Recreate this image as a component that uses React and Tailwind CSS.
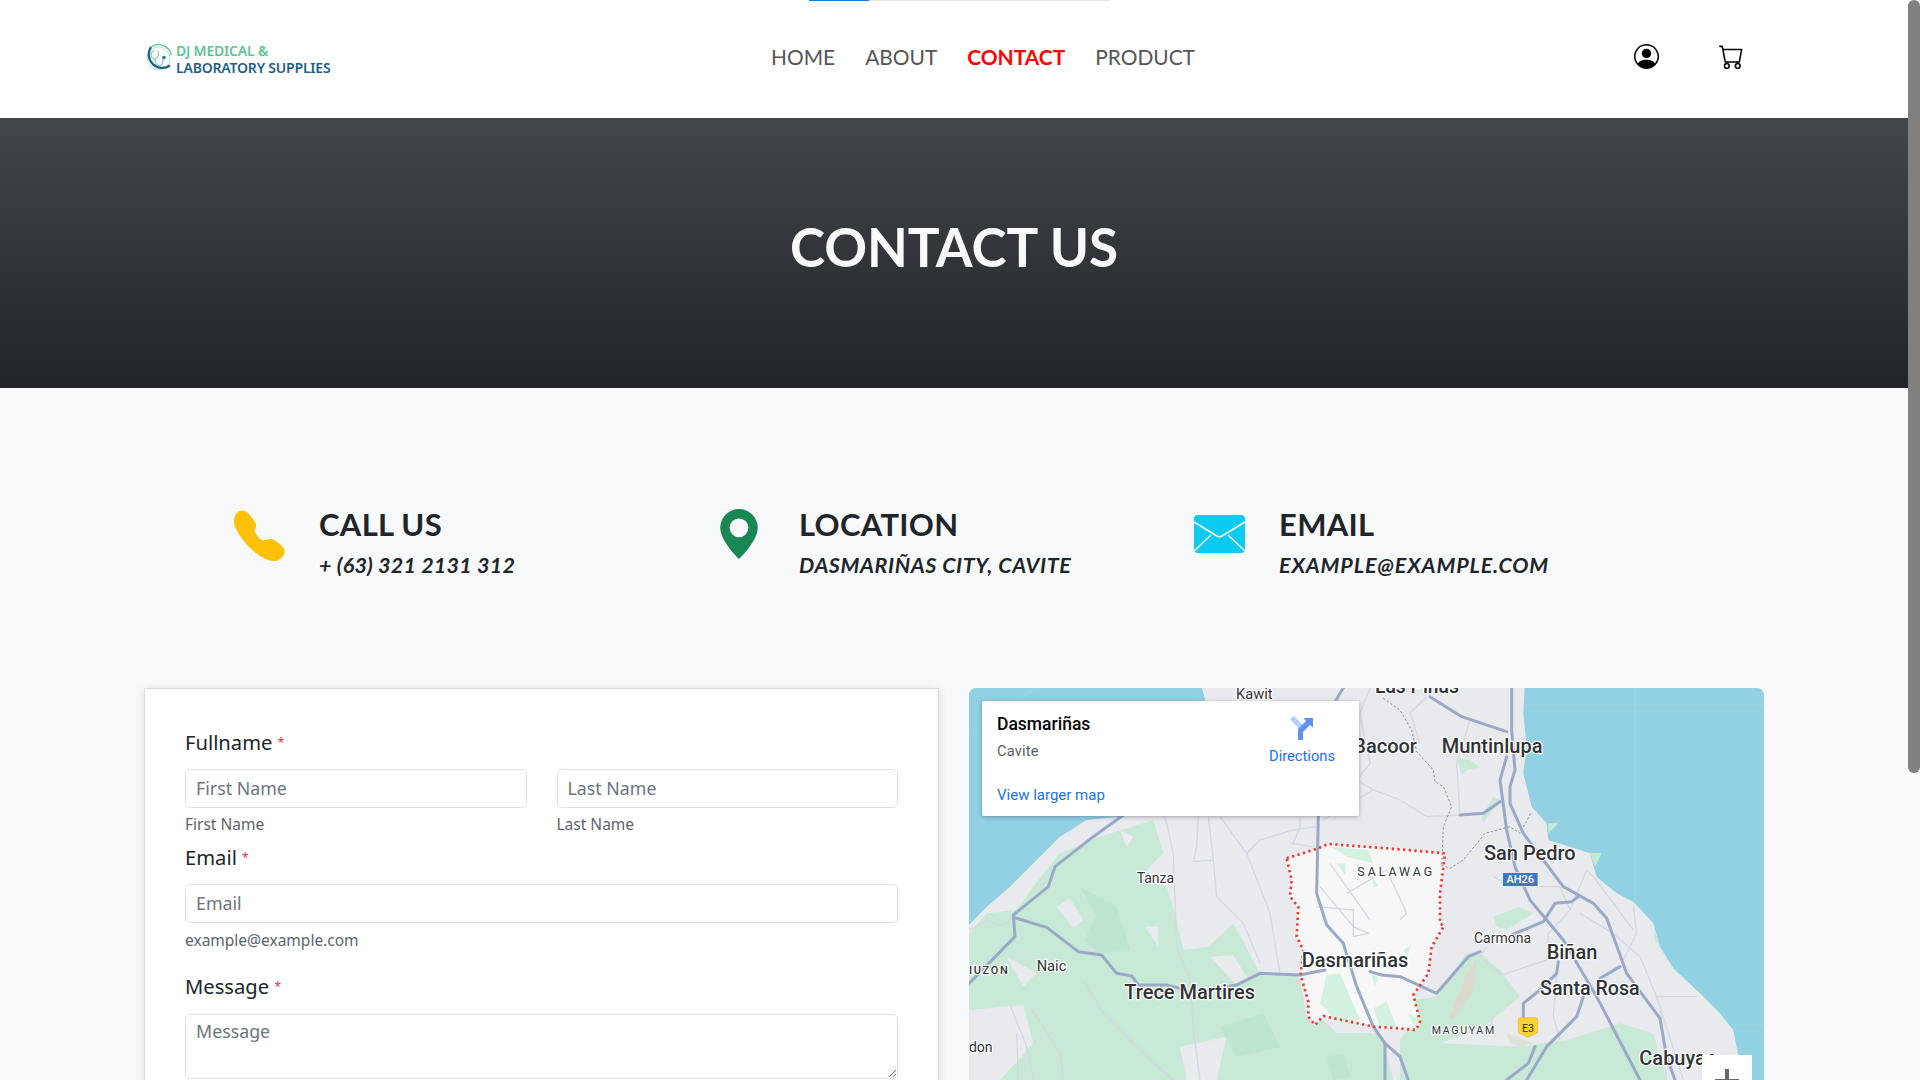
import React from 'react';
import { BsPersonCircle, BsCart, BsGeoAltFill } from 'react-icons/bs';

const NUNITO = "font-['Lato','Noto_Sans',sans-serif]";

const highways = [
  'M490 405L400 470L285 560L265 620L160 705L165 770L27 910',
  'M160 712L260 742L355 815L425 825L470 880L515 888L535 915L620 915L660 925L700 940L830 915L900 880L1020 885L1095 870',
  'M1075 405L1070 640L1100 735L1150 790L1190 920L1240 1040L1275 1090L1275 1200',
  'M1275 1090L1320 1130L1345 1200',
  'M1150 24L1125 65',
  'M1230 875L1265 885L1320 890L1430 940L1525 830L1560 815',
  // right hand side of the map
  'M1655 24L1655 150L1665 270L1650 320L1650 370L1690 460L1750 540L1810 620L1900 670L1940 715L2000 880L2100 1015L2120 1130L2145 1200',
  'M1640 230L1620 300L1640 450L1665 560L1710 660L1810 780L1910 950L2040 1200',
  'M1410 50L1505 110L1640 155',
  'M1500 405L1570 400L1620 365',
  'M1855 650L1835 665L1785 670L1750 725L1655 765',
  'M1980 860L1920 895',
  'M1795 845L1790 880L1740 930L1690 970L1690 1010',
  'M1870 950L1850 1010L1760 1100L1700 1200',
  'M1725 1100L1705 1150L1640 1200',
];

const minorRoads = [
  'M615 410L640 520L650 800L690 900L700 1050L720 1200',
  'M715 410L710 500L700 545L760 540L745 410',
  'M780 410L860 520L930 700L940 760L960 880',
  'M760 540L770 650L850 730L900 850',
  'M860 520L900 480L1000 450L1070 440',
  'M1000 490L1020 440L1020 410',
  'M990 490L1060 500',
  'M1080 620L1180 740L1225 760L1180 770L1180 690L1070 680',
  'M1110 550L1230 720M1160 640L1280 570L1340 700L1320 720',
  'M150 975L200 1100L220 1200M170 1060L175 1200M210 980L300 1120L310 1200',
  'M370 900L430 1000L560 1130L640 1200',
  'M27 750L80 720L125 740L160 712',
  'M1090 420L1240 330L1190 300L1230 250L1200 100L1230 24',
  'M1240 330L1320 360L1400 410L1500 405L1490 250L1530 120',
  'M1400 50L1350 100L1380 190',
  'M1600 1000L1590 1050M1580 800L1560 830L1625 885L1760 840L1765 760L1830 690M1760 840L1840 790',
  'M1600 590L1660 620L1800 620L1830 690L1880 570L1900 590L2020 750',
  'M1860 700L1960 760L2040 830L2090 950L2170 1200',
  'M2020 680L2030 760L1990 840',
  'M2085 950L2210 950M2100 975L2120 1200',
  'M1790 880L1780 1010L1800 1080',
];

const dasmarinas = '980,535 1075,505 1105,492 1320,508 1455,520 1440,640 1440,730 1452,738 1415,800 1405,880 1360,945 1380,1025 1368,1050 1320,1045 1240,1040 1090,1008 1065,1035 1045,1010 1045,965 1022,885 1030,810 1010,770 1015,680 990,650 995,600';

const labels = [
  { x: 828, y: 58, size: 44, text: 'Kawit' },
  { x: 1245, y: 40, size: 58, text: 'Las Piñas', weight: 500 },
  { x: 1180, y: 218, size: 60, text: 'Bacoor', weight: 500 },
  { x: 1445, y: 220, size: 60, text: 'Muntinlupa', weight: 500 },
  { x: 530, y: 610, size: 42, text: 'Tanza' },
  { x: 230, y: 873, size: 44, text: 'Naic' },
  { x: 27, y: 882, size: 33, text: 'IUZON', spacing: 5, weight: 500 },
  { x: 493, y: 957, size: 60, text: 'Trece Martires', weight: 500 },
  { x: 1025, y: 862, size: 60, text: 'Dasmariñas', weight: 500 },
  { x: 1192, y: 587, size: 37, text: 'SALAWAG', spacing: 9 },
  { x: 27, y: 1116, size: 42, text: 'don' },
  { x: 1572, y: 540, size: 60, text: 'San Pedro', weight: 500 },
  { x: 1542, y: 790, size: 42, text: 'Carmona' },
  { x: 1760, y: 836, size: 60, text: 'Biñan', weight: 500 },
  { x: 1740, y: 945, size: 59, text: 'Santa Rosa', weight: 500 },
  { x: 1415, y: 1062, size: 32, text: 'MAGUYAM', spacing: 5 },
  { x: 2038, y: 1155, size: 60, text: 'Cabuyao', weight: 500 },
];

const MapDrawing = () => (
  <svg viewBox="0 0 795 620" className="block w-full h-full">
    <g transform="translate(-9 -8) scale(0.33333)">
      <rect x="0" y="0" width="2500" height="2000" fill="#e8eaed" />

      {/* water */}
      <polygon fill="#92d0e3" points="0,0 720,0 735,60 480,410 380,420 300,470 230,540 150,620 80,680 27,735 0,760" />
      <polygon fill="#92d0e3" points="1695,0 1690,100 1700,200 1690,280 1715,380 1760,430 1765,480 1890,520 1910,590 1970,640 2020,665 2080,730 2100,800 2140,865 2220,940 2280,1000 2320,1050 2350,1200 2500,1200 2500,0" />
      <path d="M30 170L160 60M60 120L230 24M2026 24V660M1690 75H2412M2320 1035H2412" stroke="#a5d9e8" strokeWidth="2" fill="none" />

      {/* green areas */}
      <polygon fill="#c9e9d7" points="27,760 80,700 170,690 235,600 300,520 420,470 580,420 610,520 540,590 620,620 650,720 670,810 745,800 820,730 900,880 1000,880 1020,900 1040,1010 1090,1020 1130,1060 1250,1060 1275,1100 1300,1200 27,1200" />
      <polygon fill="#c9e9d7" points="1320,1080 1360,1030 1360,960 1430,950 1520,820 1560,820 1620,870 1680,950 1570,1040 1440,1090 1670,1100 1820,1080 1980,1030 2080,1060 2120,1200 1320,1200" />
      <polygon fill="#c9e9d7" points="1490,235 1530,240 1560,262 1520,270 1505,285" />
      <polygon fill="#c9e9d7" points="1600,710 1680,680 1720,700 1640,750 1610,740" />
      <polygon fill="#c9e9d7" points="1600,350 1620,360 1570,430 1565,410" />
      <polygon fill="#c9e9d7" points="1765,430 1795,430 1765,460" />
      <polygon fill="#c9e9d7" points="1890,518 1925,520 1905,560" />
      <polygon fill="#c9e9d7" points="2080,730 2095,790 2085,790" />
      <polygon fill="#e8eaed" points="27,990 190,975 220,1090 120,1200 27,1200" />
      <polygon fill="#e8eaed" points="290,680 330,655 370,720 340,745" />
      <polygon fill="#e8eaed" points="750,830 820,825 860,890 830,915" />
      <polygon fill="#e8eaed" points="555,740 595,740 595,800" />
      <polygon fill="#e8eaed" points="480,450 520,470 500,500" />
      <polygon fill="#e8eaed" points="660,1100 800,1070 770,1200 680,1200" />
      <polygon fill="#e8eaed" points="140,830 230,880 190,920" />
      <polygon fill="#dcd9cf" points="1470,1010 1520,880 1550,840 1540,930 1480,1020" />
      <polygon fill="#dfe0d8" points="1640,1060 1720,1090 1680,1100 1650,1090" />
      <polygon fill="#bfe4d0" points="360,620 470,680 510,810 420,820 370,780 410,710" />
      <polygon fill="#bfe4d0" points="780,1040 910,1000 960,1100 830,1130" />
      <polygon fill="#bfe4d0" points="1100,1130 1150,1120 1170,1190 1120,1200" />

      {/* city area */}
      <polygon fill="#f7f7f8" points={dasmarinas} />
      <g fill="#d3f3e0">
        <polygon points="1115,500 1225,510 1240,550 1160,530" />
        <polygon points="1130,550 1158,550 1155,585" />
        <polygon points="1235,585 1255,620 1240,620" />
        <polygon points="1100,885 1140,880 1200,1020 1135,1030 1080,970" />
        <polygon points="1240,985 1280,965 1310,1040 1260,1040" />
        <polygon points="1330,810 1355,795 1340,830" />
        <polygon points="1235,885 1255,890 1245,920" />
        <polygon points="1345,1000 1380,1020 1365,1045" />
      </g>

      <g fill="none" stroke="#d2d8e3" strokeWidth="4" strokeLinejoin="round">
        {minorRoads.map((d, i) => <path key={i} d={d} />)}
      </g>

      {/* dashed boundary */}
      <path d="M1270 55L1320 90L1355 150L1370 215L1420 270L1425 305L1450 320L1475 380L1450 440L1445 560M1445 555L1470 565L1510 540L1575 460L1650 440L1680 460L1715 395" fill="none" stroke="#8a8f96" strokeWidth="3" strokeDasharray="7 6" />

      <g fill="none" stroke="#9aa9c8" strokeWidth="9" strokeLinejoin="round" strokeLinecap="round">
        {highways.map((d, i) => <path key={i} d={d} />)}
      </g>

      <polygon points={dasmarinas} fill="none" stroke="#ef3b36" strokeWidth="8" strokeDasharray="7 10" />

      <g fontFamily="Roboto, sans-serif" fill="#303336" stroke="#ffffff" strokeWidth="7" strokeLinejoin="round" paintOrder="stroke">
        {labels.map(l => (
          <text key={l.text} x={l.x} y={l.y} fontSize={l.size} fontWeight={l.weight || 400} letterSpacing={l.spacing || 0}>{l.text}</text>
        ))}
      </g>

      {/* road shields */}
      <rect x="1628" y="578" width="106" height="41" fill="#3b78c9" stroke="#fff" strokeWidth="2" />
      <text x="1681" y="610" textAnchor="middle" fontFamily="Roboto, sans-serif" fontSize="33" fontWeight="500" fill="#fff">AH26</text>
      <path d="M1682 1013H1726Q1733 1013 1733 1020V1058L1704 1072L1675 1058V1020Q1675 1013 1682 1013Z" fill="#fbd232" stroke="#e8b923" strokeWidth="2" />
      <text x="1704" y="1055" textAnchor="middle" fontFamily="Roboto, sans-serif" fontSize="32" fill="#333">E3</text>
    </g>
  </svg>
);

const PhoneIcon = () => (
  <svg viewBox="20 25 165 160" className="w-[55px] h-[53px] -ml-[2px]" fill="#ffc107" stroke="#ffc107" strokeWidth="8" strokeLinejoin="round">
    <path d="M32 48C36 34 52 30 62 38C72 48 84 62 88 72C90 82 82 88 84 94C90 106 100 118 110 124C118 126 128 116 140 120C152 126 168 138 174 148C178 158 166 174 152 178C136 180 112 170 90 152C64 130 42 102 32 76C28 66 29 56 32 48Z" />
  </svg>
);

const MailIcon = () => (
  <svg viewBox="0 0 51 38" className="w-[51px] h-[38px] mt-[6px]">
    <rect width="51" height="38" rx="4" fill="#0dcaf0" />
    <path d="M0 7L23 21Q25.500 22.500 28 21L51 7M0 36L17 20M51 36L34 20" fill="none" stroke="#f8f9fb" strokeWidth="1.600" />
  </svg>
);

const Logo = () => (
  <div className="flex items-center">
    <svg viewBox="0 0 29 29" className="w-[29px] h-[29px]">
      <circle cx="14.500" cy="14.500" r="11.500" fill="none" stroke="#86dcbf" strokeWidth="0.700" />
      <path d="M7 3A13.500 13.500 0 0 1 27.500 11" fill="none" stroke="#5cc596" strokeWidth="1.300" />
      <path d="M7 3A13.500 13.500 0 0 0 26 21.500" fill="none" stroke="#1f5f86" strokeWidth="2.200" />
      <path d="M8 8C6 12 8 15 11 15C11 20 14 23 17 21C19 20 19 17 19 15M8 8L10.500 6.500M14 7C15 11 14 14 11 15" fill="none" stroke="#3fbfa3" strokeWidth="0.900" />
      <circle cx="20" cy="13.500" r="1.800" fill="#2c7a8f" />
    </svg>
    <div className="ml-[3px] font-['Noto_Sans',sans-serif] font-semibold text-[14px] leading-[17px] tracking-[-0.200px]">
      <div className="text-[#5cc596]">DJ MEDICAL &amp;</div>
      <div className="text-[#1f5f86]">LABORATORY SUPPLIES</div>
    </div>
  </div>
);

const InfoItem = ({ icon, title, text, spacing }) => (
  <div className="flex items-start">
    <div className="w-[85px] shrink-0 pt-[3px]">{icon}</div>
    <div className={NUNITO + ' text-[#212529]'}>
      <div className="text-[31px] leading-[36px] font-bold tracking-[0.300px]">{title}</div>
      <div className={'mt-[8px] text-[21.500px] leading-[30px] font-bold italic ' + spacing}>{text}</div>
    </div>
  </div>
);

const Label = ({ children }) => (
  <label className="block text-[20.200px] leading-[30px] text-[#212529]">
    {children} <span className="text-[12px] text-[#dc3545] align-[3px]">*</span>
  </label>
);

const hintClass = 'mt-[5px] text-[15.500px] leading-[22px] text-[#5c636a]';
const inputClass = 'block w-full h-[39px] px-[10px] pb-[2px] border border-[#dee2e6] rounded-[5px] bg-white text-[17.800px] placeholder:text-[#6c757d] outline-none';

export default function App() {
  return (
    <div className="relative flex h-screen overflow-hidden bg-[#f8f9fb]">
      {/* page load bar */}
      <div className="absolute top-0 left-[809px] w-[301px] h-px bg-[#e5e5e5]">
        <div className="w-[60px] h-px bg-[#0d7fe0]"></div>
      </div>

      <main className="flex-1 min-w-0">
        <header className="h-[118px] bg-white flex items-center px-[144px]">
          <div className="w-[627px] -mt-[1px]"><Logo /></div>
          <nav className={NUNITO + ' flex gap-[30px] text-[20.900px] text-[#555] -mt-[4px]'}>
            <a>HOME</a>
            <a>ABOUT</a>
            <a className="font-bold text-[#ff0000]">CONTACT</a>
            <a>PRODUCT</a>
          </nav>
          <div className="ml-auto flex items-center gap-[60px] pr-[20px] -mt-[6px]">
            <BsPersonCircle size={25} color="#000" />
            <BsCart size={25} color="#000" />
          </div>
        </header>

        <section className="h-[270px] bg-gradient-to-b from-[#43474b] to-[#212529] flex items-center justify-center">
          <h1 className={NUNITO + ' text-[53px] font-bold text-[#f8f9fa] -mt-[12px]'}>CONTACT US</h1>
        </section>

        <section className="w-[1440px] mx-auto grid grid-cols-3 pt-[118px]">
          <InfoItem icon={<PhoneIcon />} title="CALL US" text="+ (63) 321 2131 312" spacing="tracking-[0.250px]" />
          <InfoItem icon={<BsGeoAltFill size={50} color="#198754" />} title="LOCATION" text="DASMARIÑAS CITY, CAVITE" spacing="tracking-[0.600px]" />
          <InfoItem icon={<MailIcon />} title="EMAIL" text="EXAMPLE@EXAMPLE.COM" spacing="tracking-[0.850px]" />
        </section>

        <section className="w-[1620px] mx-auto mt-[108px] grid grid-cols-2 gap-[30px] h-[620px]">
          <form className="bg-white border border-[#d8dadd] shadow-[0_2px_10px_rgba(0,0,0,0.12)] px-[40px] pt-[38px] font-['Noto_Sans',sans-serif]">
            <Label>Fullname</Label>
            <div className="grid grid-cols-2 gap-[30px] mt-[11px]">
              <div>
                <input className={inputClass} placeholder="First Name" />
                <div className={hintClass}>First Name</div>
              </div>
              <div>
                <input className={inputClass} placeholder="Last Name" />
                <div className={hintClass}>Last Name</div>
              </div>
            </div>
            <div className="mt-[7px]"><Label>Email</Label></div>
            <input className={inputClass + ' mt-[11px]'} placeholder="Email" />
            <div className="mt-[6px] text-[15.500px] leading-[22px] text-[#5c636a]">example@example.com</div>
            <div className="mt-[20px]"><Label>Message</Label></div>
            <textarea className="block w-full h-[65px] mt-[12px] px-[10px] py-[3px] border border-[#dee2e6] rounded-[5px] bg-white text-[17.800px] placeholder:text-[#6c757d] outline-none" placeholder="Message"></textarea>
          </form>

          <div className="relative overflow-hidden rounded-[7px] bg-[#e8eaed]">
            <MapDrawing />
            <div className="absolute top-[13px] left-[13px] w-[377px] h-[115px] bg-white rounded-[2px] shadow-[0_1px_4px_rgba(0,0,0,0.3)] px-[15px] pt-[12px] font-['Roboto',sans-serif] flex justify-between">
              <div>
                <div className="text-[17.500px] leading-[22px] font-medium text-black">Dasmariñas</div>
                <div className="mt-[6px] text-[14.600px] leading-[20px] text-[#5b5b5b] tracking-[0.200px]">Cavite</div>
                <div className="mt-[24px] text-[15px] leading-[20px] text-[#1a73e8]">View larger map</div>
              </div>
              <div className="flex flex-col items-center pr-[9px]">
                <svg viewBox="0 0 24 24" className="w-[24px] h-[24px] mt-[3px] -ml-[2px]">
                  <path d="M1 3L5 0L14 9V24H9V12Z" fill="#b8cffb" />
                  <path d="M9 24V13L17 5L14.500 2H24V11.500L21 9L14 16V24Z" fill="#5f92f7" />
                </svg>
                <div className="mt-[6px] text-[14.700px] leading-[20px] text-[#1a73e8]">Directions</div>
              </div>
            </div>
            <div className="absolute top-[367px] left-[733px] w-[50px] h-[100px] bg-white flex justify-center pt-[14px]">
              <svg viewBox="0 0 24 24" className="w-[24px] h-[24px]">
                <path d="M10 0H14V10H24V14H14V24H10V14H0V10H10Z" fill="#666" />
              </svg>
            </div>
          </div>
        </section>
      </main>

      {/* scrollbar */}
      <aside className="w-[12px] shrink-0">
        <div className="h-[773px] rounded-[6px] bg-[#808080]"></div>
      </aside>
    </div>
  );
}
